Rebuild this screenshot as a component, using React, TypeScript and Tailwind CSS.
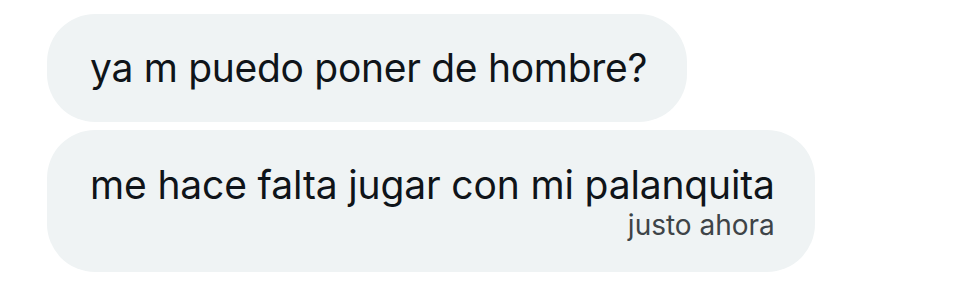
const BUBBLE = 'rounded-[48px] bg-[#eff3f4] pl-[43px] pr-[40px] text-[#0f1419]';

export default function App() {
  return (
    <div
      className="flex h-[290px] w-[970px] flex-col items-start gap-[8px] bg-white pl-[47px] pt-[14px]"
      style={{ fontFamily: 'Inter, "Noto Sans", sans-serif' }}
    >
      <div className={`${BUBBLE} flex h-[108px] items-center`}>
        <p className="text-[39px] leading-[46px] tracking-[-0.3px]">ya m puedo poner de hombre?</p>
      </div>
      <div className={`${BUBBLE} flex h-[142px] flex-col items-end pt-[32px]`}>
        <p className="text-[39px] leading-[46px] tracking-[-0.15px]">me hace falta jugar con mi palanquita</p>
        <span className="text-[28px] leading-[34px] text-[#3e4448]">justo ahora</span>
      </div>
    </div>
  );
}
